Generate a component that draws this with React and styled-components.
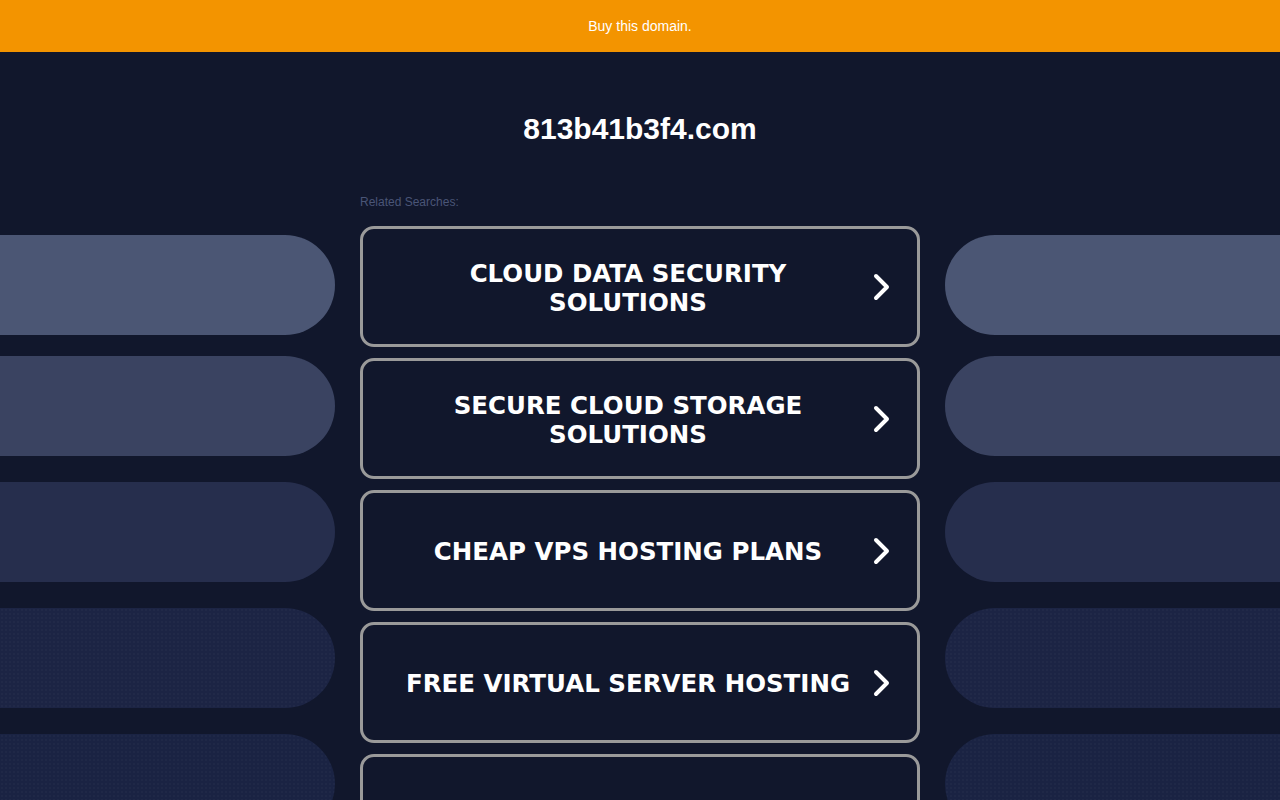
import React from "react";
import styled, { createGlobalStyle } from "styled-components";

const Global = createGlobalStyle`
  html, body { margin: 0; padding: 0; background: #11172c; }
  body { font-family: "Liberation Sans", Arial, sans-serif; overflow: hidden; }
  * { box-sizing: border-box; }
`;

const Page = styled.div`
  width: 1280px;
  height: 800px;
  overflow: hidden;
  background: #11172c;
`;

const TopBar = styled.a`
  display: flex;
  align-items: center;
  justify-content: center;
  height: 52px;
  background: #f39400;
  color: #ffffff;
  font-size: 14px;
  text-decoration: none;
`;

const Title = styled.h1`
  margin: 59px 0 0;
  height: 36px;
  line-height: 36px;
  text-align: center;
  color: #ffffff;
  font-size: 30px;
  font-weight: 700;
  font-family: "Liberation Sans", Arial, sans-serif;
`;

const Grid = styled.div`
  display: grid;
  grid-template-columns: 335px 560px 335px;
  column-gap: 25px;
  margin-top: 48px;
`;

const SideColumn = styled.div`
  display: flex;
  flex-direction: column;
`;

const Pill = styled.div`
  height: 100px;
  flex: none;
  margin-top: ${(p) => p.$top}px;
  background-color: ${(p) => p.$color};
  border-radius: ${(p) => (p.$side === "left" ? "0 50px 50px 0" : "50px 0 0 50px")};
  ${(p) =>
    p.$dotted &&
    `background-image: radial-gradient(rgba(255,255,255,0.025) 0.8px, transparent 1px);
     background-size: 4px 4px;`}
`;

const Center = styled.div`
  display: flex;
  flex-direction: column;
`;

const Related = styled.div`
  font-size: 12px;
  line-height: 14px;
  height: 14px;
  color: #4a5577;
  margin-bottom: 17px;
`;

const SearchButton = styled.a`
  display: flex;
  align-items: center;
  height: 121px;
  flex: none;
  margin-bottom: 11px;
  padding: 0 26px 0 30px;
  border: 3px solid #9a9a9a;
  border-radius: 14px;
  background: #11172c;
  color: #ffffff;
  text-decoration: none;
`;

const ButtonText = styled.span`
  flex: 1;
  margin-right: 10px;
  padding: 2px 6px 0;
  text-align: center;
  font-family: "DejaVu Sans", Verdana, sans-serif;
  font-weight: 700;
  font-size: 24.5px;
  line-height: 29px;
  text-transform: uppercase;
`;

const Chevron = () => (
  <svg width="18" height="28" viewBox="0 0 18 28" style={{ flex: "none" }}>
    <polyline
      points="3,3 14,14 3,25"
      fill="none"
      stroke="#ffffff"
      strokeWidth="4"
      strokeLinecap="round"
      strokeLinejoin="round"
    />
  </svg>
);

const pills = [
  { top: 40, color: "#4b5674" },
  { top: 21, color: "#3a4361" },
  { top: 26, color: "#262e4d" },
  { top: 26, color: "#1c2444", dotted: true },
  { top: 26, color: "#1a2343", dotted: true },
];

const searches = [
  "Cloud Data Security Solutions",
  "Secure Cloud Storage Solutions",
  "Cheap VPS Hosting Plans",
  "Free Virtual Server Hosting",
  "Web Hosting Services",
];

export default function App() {
  return (
    <Page>
      <Global />
      <TopBar href="#">Buy this domain.</TopBar>
      <Title>813b41b3f4.com</Title>
      <Grid>
        <SideColumn>
          {pills.map((p, i) => (
            <Pill key={i} $side="left" $top={p.top} $color={p.color} $dotted={p.dotted} />
          ))}
        </SideColumn>
        <Center>
          <Related>Related Searches:</Related>
          {searches.map((s) => (
            <SearchButton key={s} href="#">
              <ButtonText>{s}</ButtonText>
              <Chevron />
            </SearchButton>
          ))}
        </Center>
        <SideColumn>
          {pills.map((p, i) => (
            <Pill key={i} $side="right" $top={p.top} $color={p.color} $dotted={p.dotted} />
          ))}
        </SideColumn>
      </Grid>
    </Page>
  );
}
